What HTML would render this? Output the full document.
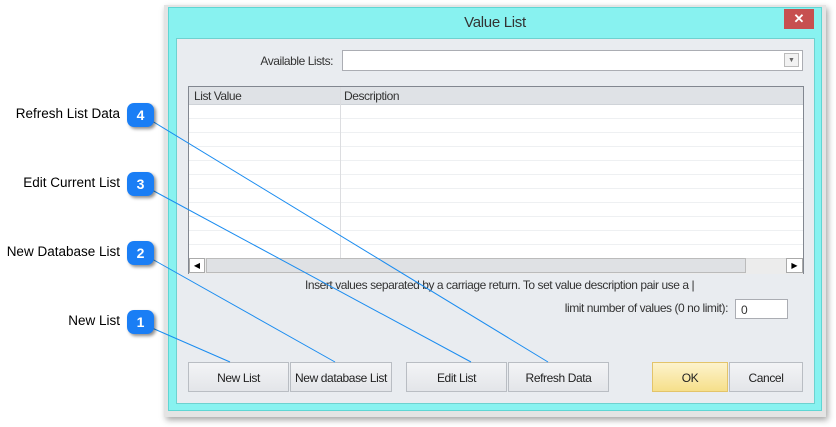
<!DOCTYPE html>
<html><head><style>
body{margin:0;width:836px;height:427px;background:#fff;position:relative;overflow:hidden;font-family:"Liberation Sans",Arial,sans-serif;}
.a{position:absolute;}
.lbl{font-size:13.5px;color:#000;text-align:right;width:120px;left:0;}
.badge{left:127px;width:27px;height:24px;border-radius:7px;background:#1a7ef5;color:#fff;font-weight:bold;font-size:14px;text-align:center;line-height:24px;box-shadow:2px 2px 3px rgba(0,0,0,.45);}
.btn{top:362px;height:30px;border:1px solid #b9bdc3;background:linear-gradient(#f3f4f6,#e3e5e9);font-size:12px;letter-spacing:-0.4px;color:#222;text-align:center;line-height:30px;box-sizing:border-box;}
.t{font-size:12px;letter-spacing:-0.45px;color:#333;}
</style></head><body>
<div class="a" style="left:164px;top:5px;width:662px;height:412px;background:#e4e4e4;box-shadow:2px 3px 6px rgba(0,0,0,.35);"></div>
<div class="a" style="left:168px;top:7px;width:654px;height:404px;background:#88f2f0;border:1px solid #5fd6d4;box-sizing:border-box;"></div>
<div class="a" style="left:168px;top:14px;width:654px;text-align:center;font-size:15px;letter-spacing:-0.3px;color:#333;">Value List</div>
<div class="a" style="left:784px;top:9px;width:30px;height:20px;background:#c75050;color:#fff;font-size:13px;text-align:center;line-height:20px;font-weight:bold;">✕</div>
<div class="a" style="left:176px;top:38px;width:639px;height:366px;background:#e9ecf0;border:1px solid #6ed2d0;box-sizing:border-box;"></div>
<div class="a t" style="left:200px;top:54px;width:133px;text-align:right;">Available Lists:</div>
<div class="a" style="left:342px;top:50px;width:461px;height:21px;background:#fff;border:1px solid #abadb3;box-sizing:border-box;"></div>
<div class="a" style="left:784px;top:53px;width:15px;height:14px;border:1px solid #bbb;background:#f2f2f2;font-size:7px;color:#666;text-align:center;line-height:14px;box-sizing:border-box;">▼</div>
<div class="a" style="left:188px;top:86px;width:616px;height:188px;background:#fff;border:1px solid #828790;box-sizing:border-box;
background-image:repeating-linear-gradient(#fff 0 13px,#eef0f2 13px 14px);background-position:0 18px;"></div>
<div class="a" style="left:189px;top:87px;width:614px;height:17px;background:#dfe2e6;border-bottom:1px solid #cfd3d8;"></div>
<div class="a t" style="left:194px;top:89px;">List Value</div>
<div class="a t" style="left:344px;top:89px;">Description</div>
<div class="a" style="left:340px;top:87px;width:1px;height:171px;background:#dcdde0;"></div>
<div class="a" style="left:189px;top:258px;width:614px;height:15px;background:#ececec;border-top:1px solid #ddd;"></div>
<div class="a" style="left:189px;top:258px;width:16px;height:15px;background:#fff;border:1px solid #aaa;box-sizing:border-box;font-size:8px;text-align:center;line-height:13px;">◀</div>
<div class="a" style="left:206px;top:258px;width:540px;height:15px;background:#dfe1e4;border:1px solid #bbb;box-sizing:border-box;"></div>
<div class="a" style="left:786px;top:258px;width:17px;height:15px;background:#fff;border:1px solid #aaa;box-sizing:border-box;font-size:8px;text-align:center;line-height:13px;">▶</div>
<div class="a t" style="left:305px;top:278px;">Insert values separated by a carriage return. To set value description pair use a |</div>
<div class="a t" style="left:500px;top:301px;width:228px;text-align:right;">limit number of values (0 no limit):</div>
<div class="a t" style="left:735px;top:299px;width:53px;height:20px;background:#fff;border:1px solid #abadb3;box-sizing:border-box;padding:3px 5px;">0</div>
<div class="a btn" style="left:188px;width:101px;">New List</div>
<div class="a btn" style="left:290px;width:102px;">New database List</div>
<div class="a btn" style="left:406px;width:101px;">Edit List</div>
<div class="a btn" style="left:508px;width:101px;">Refresh Data</div>
<div class="a btn" style="left:652px;width:76px;background:linear-gradient(#fdf3cc,#f6df8a);border-color:#e3c46a;">OK</div>
<div class="a btn" style="left:729px;width:74px;">Cancel</div>
<div class="a lbl" style="top:106px;">Refresh List Data</div>
<div class="a lbl" style="top:175px;">Edit Current List</div>
<div class="a lbl" style="top:244px;">New Database List</div>
<div class="a lbl" style="top:313px;">New List</div>
<svg class="a" style="left:0;top:0" width="836" height="427"><g stroke="#1a8cf0" stroke-width="1" fill="none">
<line x1="152" y1="121" x2="548" y2="362"/><line x1="152" y1="190" x2="471" y2="362"/>
<line x1="152" y1="259" x2="335" y2="362"/><line x1="152" y1="328" x2="230" y2="362"/></g></svg>
<div class="a badge" style="top:103px;">4</div>
<div class="a badge" style="top:172px;">3</div>
<div class="a badge" style="top:241px;">2</div>
<div class="a badge" style="top:310px;">1</div>
</body></html>
